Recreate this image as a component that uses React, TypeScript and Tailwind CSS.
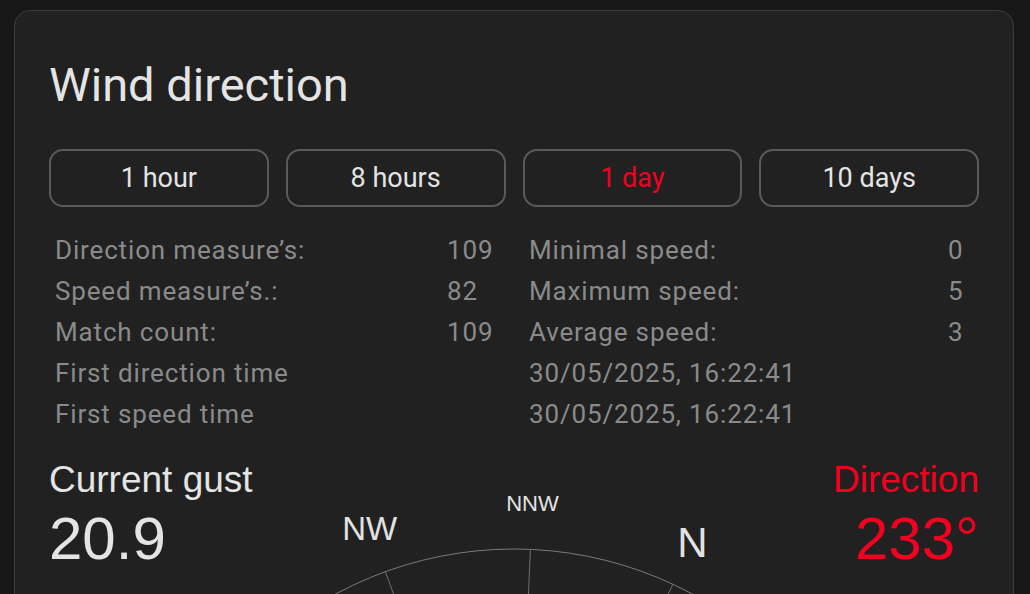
import type { ReactNode } from "react";

const RANGES = ["1 hour", "8 hours", "1 day", "10 days"] as const;
const ACTIVE_RANGE = "1 day";

const POINTS = [
  "N", "NNE", "NE", "ENE", "E", "ESE", "SE", "SSE",
  "S", "SSW", "SW", "WSW", "W", "WNW", "NW", "NNW",
];

// compass is turned so north sits 25° right of the top
const NORTH_OFFSET = 25;
const CX = 465;
const CY = 469;
const RING = 376;
const LABEL_R = 422;

function labelSize(i: number) {
  if (i % 4 === 0) return 42;
  if (i % 2 === 0) return 33;
  return 22;
}

function Stat({ children, value }: { children: ReactNode; value?: ReactNode }) {
  return (
    <>
      <div>{children}</div>
      <div>{value}</div>
    </>
  );
}

function Compass() {
  return (
    <svg width={930} height={940} viewBox="0 0 930 940" className="block">
      <circle cx={CX} cy={CY} r={RING} fill="none" stroke="#7a7a7a" strokeWidth={1} />
      {POINTS.map((p, i) => {
        const a = ((NORTH_OFFSET + i * 22.5) * Math.PI) / 180;
        const x = CX + Math.sin(a) * RING;
        const y = CY - Math.cos(a) * RING;
        return <line key={`t-${p}`} x1={x} y1={y} x2={CX} y2={CY} stroke="#6e6e6e" strokeWidth={1} />;
      })}
      {POINTS.map((p, i) => {
        const a = ((NORTH_OFFSET + i * 22.5) * Math.PI) / 180;
        const x = CX + Math.sin(a) * LABEL_R;
        const y = CY - Math.cos(a) * LABEL_R;
        return (
          <text
            key={p}
            x={x}
            y={y}
            fill="#e2e2e2"
            fontSize={labelSize(i)}
            fontFamily="'Liberation Sans', Arial, sans-serif"
            textAnchor="middle"
            dominantBaseline="central"
          >
            {p}
          </text>
        );
      })}
    </svg>
  );
}

export default function App() {
  return (
    <div className="h-[594px] overflow-hidden bg-[#171717] pl-[14px] pr-[16px] pt-[10px] font-['Roboto',sans-serif]">
      <div className="rounded-[16px] border border-[#3b3b3b] bg-[#212121] px-[34px] pt-[50px]">
        <h1 className="text-[47px] leading-none font-normal text-[#e4e4e4]">Wind direction</h1>

        <div className="mt-[41px] grid grid-cols-4 gap-[17px]">
          {RANGES.map((r) => (
            <button
              key={r}
              className={`h-[58px] rounded-[14px] border-2 border-[#5a5a5a] text-[27px] leading-none ${
                r === ACTIVE_RANGE ? "text-[#f2001f]" : "text-[#e4e4e4]"
              }`}
            >
              {r}
            </button>
          ))}
        </div>

        <div className="mt-[23px] grid grid-cols-[392px_82px_419px_auto] pl-[6px] text-[26px] leading-[41px] tracking-[0.85px] text-[#8a8a8a]">
          <Stat value="109">Direction measure’s:</Stat>
          <Stat value="0">Minimal speed:</Stat>
          <Stat value="82">Speed measure’s.:</Stat>
          <Stat value="5">Maximum speed:</Stat>
          <Stat value="109">Match count:</Stat>
          <Stat value="3">Average speed:</Stat>
          <Stat>First direction time</Stat>
          <Stat>30/05/2025, 16:22:41</Stat>
          <Stat>First speed time</Stat>
          <Stat>30/05/2025, 16:22:41</Stat>
        </div>

        <div className="relative mt-[21px] font-['Liberation_Sans',Arial,sans-serif]">
          <Compass />
          <div className="absolute left-0 top-[5px] text-[#e4e4e4]">
            <div className="text-[37px] leading-none">Current gust</div>
            <div className="mt-[11px] text-[60px] leading-none">20.9</div>
          </div>
          <div className="absolute right-0 top-[5px] text-right text-[#f2001f]">
            <div className="text-[37px] leading-none">Direction</div>
            <div className="mt-[11px] text-[60px] leading-none">233°</div>
          </div>
        </div>
      </div>
    </div>
  );
}
